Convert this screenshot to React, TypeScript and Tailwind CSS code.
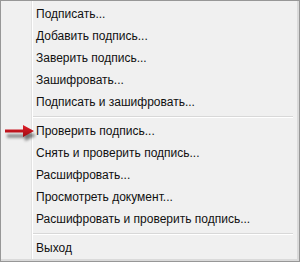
import React from "react";

const group1 = ["Подписать...", "Добавить подпись...", "Заверить подпись...", "Зашифровать...", "Подписать и зашифровать..."];
const group2 = ["Проверить подпись...", "Снять и проверить подпись...", "Расшифровать...", "Просмотреть документ...", "Расшифровать и проверить подпись..."];

function Item({ label, arrow }: { label: string; arrow?: boolean }) {
  return (
    <div className="relative h-[22px] flex items-center pl-[35px] text-[12px] text-[#111111]">
      {arrow && (
        <svg className="absolute left-[2px] top-0" width="34" height="24" viewBox="0 0 34 24">
          <defs>
            <filter id="sh" x="-30%" y="-60%" width="160%" height="220%">
              <feGaussianBlur stdDeviation="1.5" />
            </filter>
            <linearGradient id="rg" x1="0" y1="0" x2="0" y2="1">
              <stop offset="0" stopColor="#e0202a" />
              <stop offset="1" stopColor="#a00810" />
            </linearGradient>
          </defs>
          <path d="M3 12 H21 V7.5 L32 13 L21 18.5 V15 H3 Z" fill="#000" opacity="0.5" filter="url(#sh)" transform="translate(1,2.5)" />
          <path d="M2 9.5 H20 V5 L31 11 L20 17 V12.5 H2 Z" fill="url(#rg)" />
        </svg>
      )}
      <span>{label}</span>
    </div>
  );
}

function Sep() {
  return (
    <div className="h-[7px] flex flex-col justify-center pl-[31px] pr-[4px]">
      <div className="h-px bg-[#d8d8d8]" />
      <div className="h-px bg-white" />
    </div>
  );
}

export default function App() {
  return (
    <div
      className="w-[300px] h-[262px] bg-[#979797] p-px"
      style={{ fontFamily: '"Liberation Sans", Arial, sans-serif' }}
    >
      <div className="relative w-full h-full bg-[#f0f0f0] border-r-[2px] border-b-[2px] border-r-[#dadada] border-b-[#dadada] pt-[2px]">
        <div className="absolute top-0 bottom-0 left-[30px] w-px bg-[#e2e2e2]" />
        <div className="absolute top-0 bottom-0 left-[31px] w-px bg-white" />
        {group1.map((l) => (
          <Item key={l} label={l} />
        ))}
        <Sep />
        {group2.map((l, i) => (
          <Item key={l} label={l} arrow={i === 0} />
        ))}
        <Sep />
        <Item label="Выход" />
      </div>
    </div>
  );
}
